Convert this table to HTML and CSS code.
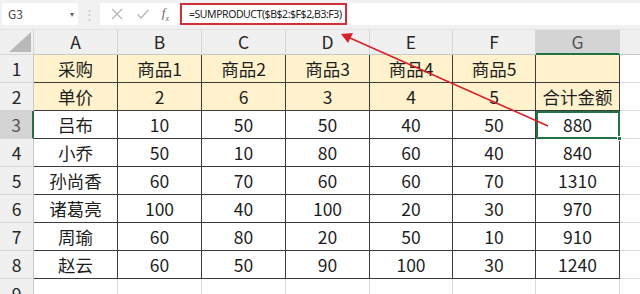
FILE: index.html
```html
<!DOCTYPE html>
<html lang="zh">
<head>
<meta charset="utf-8">
<link rel="stylesheet" href="styles.css">
</head>
<body>
<div class="app">
  <div class="toolbar">
    <div class="namebox"><span>G3</span><span class="caret">&#9662;</span></div>
    <div class="dots">&#8942;</div>
    <div class="iconbox">
      <svg class="ico" width="14" height="14" viewBox="0 0 14 14"><path d="M2 2L12 12M12 2L2 12" stroke="#b8b8b8" stroke-width="1.4" fill="none"/></svg>
      <svg class="ico" width="14" height="14" viewBox="0 0 14 14"><path d="M1.5 7.5L5 11L12.5 3" stroke="#b8b8b8" stroke-width="1.4" fill="none"/></svg>
      <span class="fx"><i>f</i><sub>x</sub></span>
    </div>
    <div class="formula"><span class="ftext">=SUMPRODUCT($B$2:$F$2,B3:F3)</span></div>
  </div>
  <div class="sheet">
    <div class="corner"><svg width="22" height="20" viewBox="0 0 22 20"><path d="M22 0V20H0Z" fill="#b9b9b9"/></svg></div>
    <div class="ch">A</div><div class="ch">B</div><div class="ch">C</div><div class="ch">D</div><div class="ch">E</div><div class="ch">F</div><div class="ch sel">G</div><div class="ch rest"></div>

    <div class="rh">1</div>
    <div class="c t y">采购</div><div class="c t y">商品1</div><div class="c t y">商品2</div><div class="c t y">商品3</div><div class="c t y">商品4</div><div class="c t y">商品5</div><div class="c t y"></div><div class="c rest"></div>

    <div class="rh">2</div>
    <div class="c t y">单价</div><div class="c t y">2</div><div class="c t y">6</div><div class="c t y">3</div><div class="c t y">4</div><div class="c t y">5</div><div class="c t y">合计金额</div><div class="c rest"></div>

    <div class="rh sel">3</div>
    <div class="c t">吕布</div><div class="c t">10</div><div class="c t">50</div><div class="c t">50</div><div class="c t">40</div><div class="c t">50</div><div class="c t active">880<span class="handle"></span></div><div class="c rest"></div>

    <div class="rh">4</div>
    <div class="c t">小乔</div><div class="c t">50</div><div class="c t">10</div><div class="c t">80</div><div class="c t">60</div><div class="c t">40</div><div class="c t">840</div><div class="c rest"></div>

    <div class="rh">5</div>
    <div class="c t">孙尚香</div><div class="c t">60</div><div class="c t">70</div><div class="c t">60</div><div class="c t">60</div><div class="c t">70</div><div class="c t">1310</div><div class="c rest"></div>

    <div class="rh">6</div>
    <div class="c t">诸葛亮</div><div class="c t">100</div><div class="c t">40</div><div class="c t">100</div><div class="c t">20</div><div class="c t">30</div><div class="c t">970</div><div class="c rest"></div>

    <div class="rh">7</div>
    <div class="c t">周瑜</div><div class="c t">60</div><div class="c t">80</div><div class="c t">20</div><div class="c t">50</div><div class="c t">10</div><div class="c t">910</div><div class="c rest"></div>

    <div class="rh">8</div>
    <div class="c t">赵云</div><div class="c t">60</div><div class="c t">50</div><div class="c t">90</div><div class="c t">100</div><div class="c t">30</div><div class="c t">1240</div><div class="c rest"></div>

    <div class="rh last">9</div>
    <div class="c"></div><div class="c"></div><div class="c"></div><div class="c"></div><div class="c"></div><div class="c"></div><div class="c"></div><div class="c rest"></div>
  </div>
  <svg class="arrow" width="640" height="294" viewBox="0 0 640 294">
    <line x1="548" y1="126" x2="350" y2="38" stroke="#d8202a" stroke-width="1.6"/>
    <path d="M341 34L353 33L348 43Z" fill="#d8202a"/>
  </svg>
</div>
</body>
</html>
```

FILE: styles.css
```css
* { box-sizing: border-box; }
html, body { margin: 0; padding: 0; }
body {
  width: 640px;
  height: 294px;
  overflow: hidden;
  background: #ffffff;
  font-family: "Noto Sans CJK SC", "Noto Sans", sans-serif;
  color: #1e1e1e;
}
.app { position: relative; width: 640px; height: 294px; }

.toolbar {
  height: 30px;
  background: #f1f1f1;
  display: flex;
  align-items: center;
  padding: 0 0 2px 2px;
  border-bottom: 1px solid #e2e2e2;
}
.namebox {
  width: 76px;
  height: 22px;
  background: #fff;
  display: flex;
  align-items: center;
  justify-content: space-between;
  padding: 0 4px 0 6px;
  font-size: 12px;
  color: #444;
}
.caret { font-size: 8px; color: #666; }
.dots {
  width: 22px;
  text-align: center;
  color: #c4c4c4;
  font-size: 13px;
}
.iconbox {
  width: 79px;
  height: 22px;
  background: #fff;
  display: flex;
  align-items: center;
  justify-content: space-around;
  padding: 0 4px;
}
.fx {
  font-family: "Liberation Serif", serif;
  font-size: 13px;
  color: #666;
}
.fx sub { font-size: 8px; font-style: italic; }
.formula {
  flex: 1;
  height: 22px;
  margin-left: 1px;
  background: #fff;
  display: flex;
  align-items: center;
}
.ftext {
  height: 22px;
  display: flex;
  align-items: center;
  padding: 0 3px 0 7px;
  border: 2px solid #d0303a;
  font-family: "Noto Sans", sans-serif;
  font-size: 10.5px;
  letter-spacing: -0.45px;
  color: #222;
}

.sheet {
  display: grid;
  grid-template-columns: 34px 84px 84px 84px 84px 83px 83px 84px 1fr;
  grid-template-rows: 25px repeat(9, 28px);
  font-size: 17.5px;
}
.corner {
  background: #f0f0f0;
  border-right: 1px solid #d6d6d6;
  border-bottom: 1px solid #d6d6d6;
  display: flex;
  align-items: flex-end;
  justify-content: flex-end;
  padding: 0 2px 2px 0;
}
.ch {
  background: #f0f0f0;
  border-right: 1px solid #d6d6d6;
  border-bottom: 1px solid #c8c8c8;
  display: flex;
  align-items: center;
  justify-content: center;
  color: #262626;
  line-height: 1;
}
.ch.sel {
  background: #d4d4d4;
  color: #555;
  border-bottom: 2px solid #217346;
}
.ch.rest { border-right: none; }
.rh {
  background: #f0f0f0;
  border-right: 1px solid #c8c8c8;
  border-bottom: 1px solid #d6d6d6;
  display: flex;
  align-items: center;
  justify-content: center;
  color: #262626;
  line-height: 1;
}
.rh.last { align-items: flex-start; padding-top: 6px; }
.rh.sel {
  background: #d4d4d4;
  color: #555;
  border-right: 2px solid #217346;
}
.c {
  border-right: 1px solid #dadada;
  border-bottom: 1px solid #dadada;
  display: flex;
  align-items: center;
  justify-content: center;
  line-height: 1;
}
.c.rest { border-right: none; }
.c.t {
  border-right: 1px solid #3c3c3c;
  border-bottom: 1px solid #3c3c3c;
}
.c.y { background: #fff2cc; }
.c.active {
  position: relative;
  outline: 2px solid #217346;
  outline-offset: -2px;
}
.handle {
  position: absolute;
  right: -3px;
  bottom: -3px;
  width: 5px;
  height: 5px;
  background: #217346;
  border: 1px solid #fff;
}
.arrow {
  position: absolute;
  left: 0;
  top: 0;
  pointer-events: none;
}
```
